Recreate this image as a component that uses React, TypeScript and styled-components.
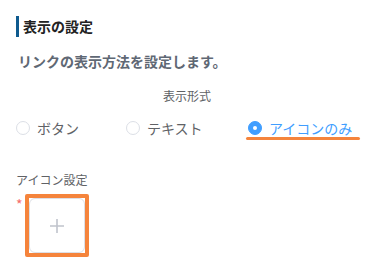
import React from "react";
import styled, { createGlobalStyle } from "styled-components";

const Global = createGlobalStyle`
  html, body { margin: 0; padding: 0; background: #fff; }
  body { font-family: "Noto Sans CJK JP", "Noto Sans", sans-serif; }
`;

const Page = styled.div`
  padding: 16px 16px 0 16px;
  width: 374px;
  box-sizing: border-box;
`;

const SectionTitle = styled.div`
  border-left: 3px solid #0e5a8e;
  padding-left: 4px;
  font-size: 14px;
  font-weight: 700;
  line-height: 21px;
  color: #222;
`;

const Description = styled.div`
  margin-top: 13px;
  padding-left: 2px;
  font-size: 14px;
  font-weight: 700;
  line-height: 22px;
  color: #5f6874;
`;

const FieldLabel = styled.div<{ $center?: boolean }>`
  font-size: 12px;
  line-height: 18px;
  color: #606266;
  text-align: ${(p) => (p.$center ? "center" : "left")};
`;

const FormatBlock = styled.div`
  margin-top: 15px;
`;

const RadioRow = styled.div`
  display: flex;
  align-items: center;
  margin-top: 13px;
  height: 20px;
`;

const RadioItem = styled.label<{ $checked?: boolean; $width: number }>`
  position: relative;
  display: flex;
  align-items: center;
  gap: 7px;
  width: ${(p) => p.$width}px;
  font-size: 14px;
  line-height: 20px;
  color: ${(p) => (p.$checked ? "#409eff" : "#606266")};
  flex: none;
`;

const Highlight = styled.span`
  position: absolute;
  left: -2px;
  right: 0;
  bottom: -2px;
  height: 3px;
  border-radius: 2px;
  background: #f5843c;
`;

const Circle = styled.span<{ $checked?: boolean }>`
  box-sizing: border-box;
  width: 14px;
  height: 14px;
  border-radius: 50%;
  border: 1px solid ${(p) => (p.$checked ? "#409eff" : "#dcdfe6")};
  background: ${(p) => (p.$checked ? "#409eff" : "#fff")};
  display: flex;
  align-items: center;
  justify-content: center;
  &::after {
    content: "";
    width: 4px;
    height: 4px;
    border-radius: 50%;
    background: #fff;
    display: ${(p) => (p.$checked ? "block" : "none")};
  }
`;

const IconBlock = styled.div`
  margin-top: 33px;
`;

const UploadRow = styled.div`
  display: flex;
  align-items: flex-start;
  margin-top: 5px;
`;

const Required = styled.span`
  color: #f56c6c;
  font-size: 14px;
  line-height: 14px;
  width: 9px;
  margin-top: 3px;
`;

const UploadFrame = styled.div`
  border: 4px solid #f5843c;
  border-radius: 2px;
`;

const UploadBox = styled.div`
  box-sizing: border-box;
  width: 56px;
  height: 55px;
  border: 1px solid #dcdfe6;
  border-radius: 6px;
  display: flex;
  align-items: center;
  justify-content: center;
  background: #fff;
`;

const options = [
  { label: "ボタン", width: 110 },
  { label: "テキスト", width: 122 },
  { label: "アイコンのみ", width: 112, checked: true },
];

export default function App() {
  return (
    <>
      <Global />
      <Page>
        <SectionTitle>表示の設定</SectionTitle>
        <Description>リンクの表示方法を設定します。</Description>
        <FormatBlock>
          <FieldLabel $center>表示形式</FieldLabel>
          <RadioRow>
            {options.map((o) => (
              <RadioItem key={o.label} $checked={o.checked} $width={o.width}>
                <Circle $checked={o.checked} />
                <span>{o.label}</span>
                {o.checked && <Highlight />}
              </RadioItem>
            ))}
          </RadioRow>
        </FormatBlock>
        <IconBlock>
          <FieldLabel>アイコン設定</FieldLabel>
          <UploadRow>
            <Required>*</Required>
            <UploadFrame>
              <UploadBox>
                <svg width="16" height="16" viewBox="0 0 16 16">
                  <path d="M8 1v14M1 8h14" stroke="#c0c4cc" strokeWidth="1.6" />
                </svg>
              </UploadBox>
            </UploadFrame>
          </UploadRow>
        </IconBlock>
      </Page>
    </>
  );
}
